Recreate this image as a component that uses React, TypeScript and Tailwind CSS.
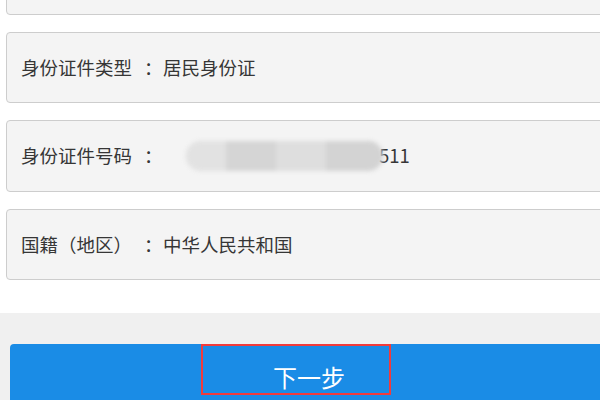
const font = { fontFamily: '"Noto Sans CJK SC", "Noto Sans", sans-serif' };

const rows = [
  { label: '身份证件类型', value: '居民身份证', h: 'h-[71px]' },
  { label: '身份证件号码', value: null, h: 'h-[72px]' },
  { label: '国籍（地区）', value: '中华人民共和国', h: 'h-[71px]' },
];

const Row = ({ label, value, h }: { label: string; value: string | null; h: string }) => (
  <div className={`${h} mr-[-20px] flex items-center pl-[14px] bg-[#f4f4f4] border border-[#cdcdcd] rounded-[4px] text-[18.5px] text-[#363636]`}>
    <span>{label}</span>
    <span className="ml-[12px] w-[19px] shrink-0">：</span>
    {value !== null ? (
      <span>{value}</span>
    ) : (
      <span className="flex items-center">
        <span className="ml-[23px] w-[197px] h-[30px] rounded-full bg-[#dadada] blur-[2px] flex overflow-hidden">
          <span className="w-[40px] bg-[#e2e2e2]" />
          <span className="w-[50px] bg-[#d5d5d5]" />
          <span className="w-[50px] bg-[#dedede]" />
          <span className="w-[57px] bg-[#d3d3d3]" />
        </span>
        <span className="ml-[-4px]">511</span>
      </span>
    )}
  </div>
);

export default function App() {
  return (
    <div className="w-[600px] h-[400px] overflow-hidden bg-white" style={font}>
      <div className="pl-[6px] flex flex-col gap-[17px] h-[313px]">
        <div className="h-[71px] mt-[-56px] mr-[-20px] bg-[#f4f4f4] border border-[#cdcdcd] rounded-[4px]" />
        {rows.map((r) => (
          <Row key={r.label} label={r.label} value={r.value} h={r.h} />
        ))}
      </div>
      <div className="bg-[#f0f0f0] h-[87px] pt-[31px] pl-[10px]">
        <div className="relative h-[70px] mr-[-20px] bg-[#1a8ce6] rounded-[4px] text-white text-[24px] flex justify-center pt-[15px]">
          <span className="ml-[-12px]">下一步</span>
          <div className="absolute left-[191px] top-0 w-[190px] h-[51px] border-2 border-[#f23b3b]" />
        </div>
      </div>
    </div>
  );
}
